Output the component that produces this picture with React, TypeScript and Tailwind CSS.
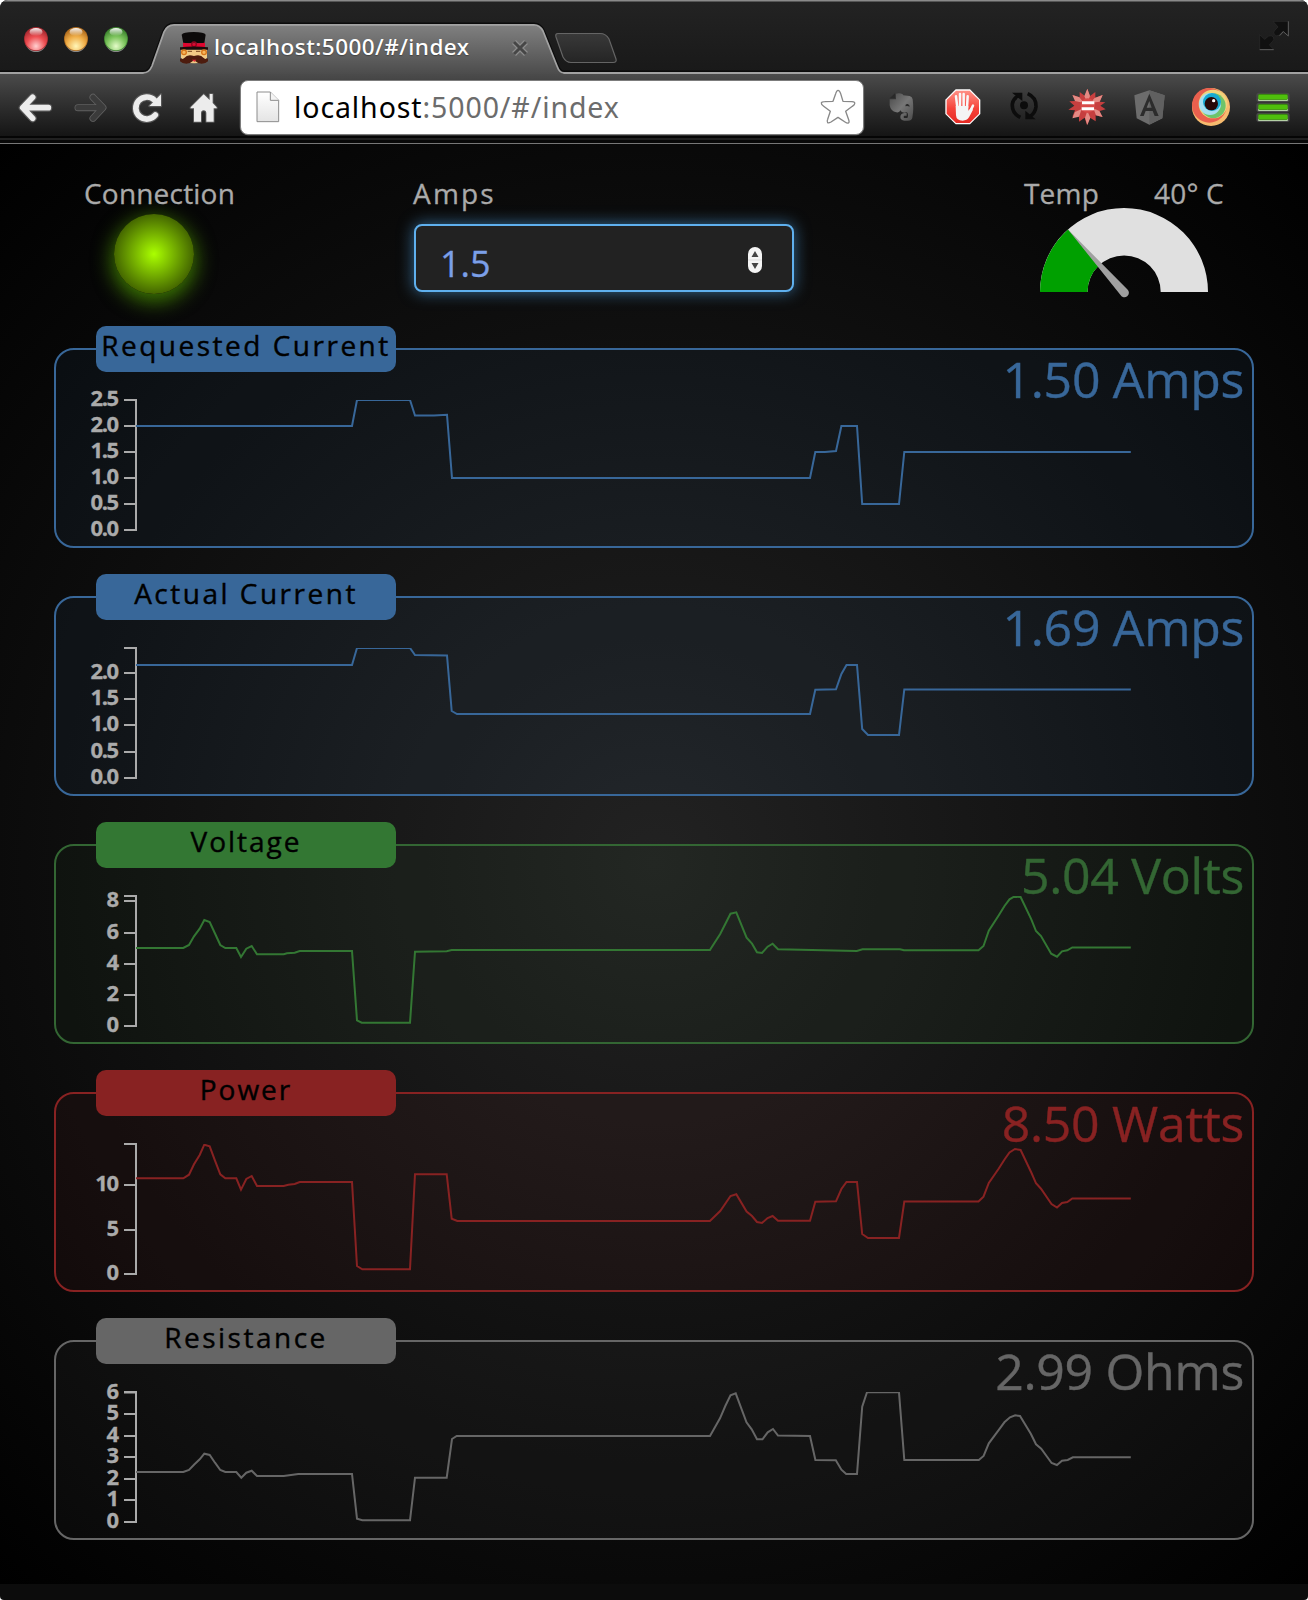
import React from "react";

type Tick = { y: number; label: string };
type Channel = {
  id: string;
  name: string;
  value: string;
  top: number;
  line: string;
  box: string;
  badge: string;
  text: string;
  ticks: Tick[];
  points: string;
};

const channels: Channel[] = [
  {
    id: "requested",
    name: "Requested Current",
    value: "1.50 Amps",
    top: 348,
    line: "#386799",
    box: "border-[#386799] bg-[#30609c]/8",
    badge: "bg-[#386799] tracking-[2.5px]",
    text: "text-[#386799]",
    ticks: [
      { y: 400, label: "2.5" },
      { y: 426, label: "2.0" },
      { y: 452, label: "1.5" },
      { y: 478, label: "1.0" },
      { y: 504, label: "0.5" },
      { y: 530, label: "0.0" },
    ],
    points:
      "136,426 352,426 357,400 410,400 415,415.5 434,415.5 447,414.7 452,478 810,478 815.3,452 825,452 836,451 841.4,426 857,426 862.2,504 899,504 904.3,452 1130.8,452",
  },
  {
    id: "actual",
    name: "Actual Current",
    value: "1.69 Amps",
    top: 596,
    line: "#386799",
    box: "border-[#386799] bg-[#30609c]/8",
    badge: "bg-[#386799] tracking-[2.5px]",
    text: "text-[#386799]",
    ticks: [
      { y: 648, label: "" },
      { y: 673, label: "2.0" },
      { y: 699, label: "1.5" },
      { y: 725, label: "1.0" },
      { y: 752, label: "0.5" },
      { y: 778, label: "0.0" },
    ],
    points:
      "136,665 352,665 357,648 410,648 415,655 447,655.5 451.7,711 457,714 810,714 815.3,689.7 836,689.3 841.4,674 846.5,665 857,665 862.2,729 868,735 899,735 904.3,689.5 1130.8,689.5",
  },
  {
    id: "voltage",
    name: "Voltage",
    value: "5.04 Volts",
    top: 844,
    line: "#337733",
    box: "border-[#336633] bg-[#336633]/8",
    badge: "bg-[#337733] tracking-[2px]",
    text: "text-[#336633]",
    ticks: [
      { y: 896, label: "" },
      { y: 901, label: "8" },
      { y: 933, label: "6" },
      { y: 964, label: "4" },
      { y: 995, label: "2" },
      { y: 1026, label: "0" },
    ],
    points:
      "136,948 183.3,948 189,945 194,936.3 199.7,928.7 204.3,920 209.7,922 215,933.5 220.3,945 225.3,948 236.3,948 241,957 246.3,948.7 251.7,946 257,954.3 283.7,954.3 287,953.3 294.7,952.7 299.7,951 352,951 357,1020.3 361.7,1022.7 410,1022.7 415,951.7 446.7,951.3 451.7,950 709.9,950 720.2,934 730.5,913.7 736.3,912.3 746.6,937.7 752,943.7 757,952.3 762,953 767.6,946.7 772.6,943.7 778,949.3 812,950 844.6,950.7 856.8,951 862.5,949.3 900,949.3 904,950.3 978.5,950.3 983.5,946 988.8,930.7 998.8,915.3 1004.5,906 1009.5,899.3 1014,896.7 1020.6,897 1031.3,919.3 1036,931 1041,936 1051.2,953.7 1057,956.7 1062,951.3 1067.3,950.3 1072.3,947.5 1130.8,947.5",
  },
  {
    id: "power",
    name: "Power",
    value: "8.50 Watts",
    top: 1092,
    line: "#882222",
    box: "border-[#882222] bg-[#882222]/8",
    badge: "bg-[#882222] tracking-[2px]",
    text: "text-[#882222]",
    ticks: [
      { y: 1144, label: "" },
      { y: 1185, label: "10" },
      { y: 1230, label: "5" },
      { y: 1274, label: "0" },
    ],
    points:
      "136,1178.3 183.3,1178.3 189,1174.7 194,1164.3 199.7,1155 204.3,1144.7 209.7,1146.3 215,1160.7 220.3,1174.3 225.3,1178.3 236.3,1178.3 241,1189.7 246.3,1179 251.7,1176 257,1186 283.7,1186 288.3,1184.7 294.7,1184 299.7,1182 352,1182 357,1266 362.3,1269.3 410,1269.3 415,1174.3 446.7,1174.3 451.7,1218.7 457.3,1221 709.9,1221 720.2,1211 730.5,1196 736.3,1194.3 746.6,1211.5 752,1216 757,1222 762,1223 767.6,1218 772.6,1216 778,1220.7 810,1220.7 815.3,1201.7 836,1201.3 841.4,1189 846.5,1182 857,1182 862.2,1234 868,1238 899,1238 904.3,1201.5 978.5,1201.5 983.5,1196.7 988.8,1183 998.8,1168.5 1004.5,1159.5 1009.5,1152.5 1015,1149 1020.6,1150 1031.3,1172.5 1036,1183.3 1041,1188.7 1051.5,1204 1057,1207.5 1062,1203 1067.3,1202 1072.3,1198.5 1130.8,1198.5",
  },
  {
    id: "resistance",
    name: "Resistance",
    value: "2.99 Ohms",
    top: 1340,
    line: "#666666",
    box: "border-[#666666] bg-[#666666]/8",
    badge: "bg-[#666666] tracking-[2.5px]",
    text: "text-[#666666]",
    ticks: [
      { y: 1392.5, label: "6" },
      { y: 1414, label: "5" },
      { y: 1436, label: "4" },
      { y: 1457, label: "3" },
      { y: 1479, label: "2" },
      { y: 1500, label: "1" },
      { y: 1522, label: "0" },
    ],
    points:
      "136,1472 183.3,1472 189,1470 194,1464.7 199.7,1459.3 204.3,1453.7 209.7,1455 215,1462.7 220.3,1470 225.3,1472 236.3,1472 241.3,1477.7 246.3,1472.7 251.7,1470.7 257,1476 283.7,1476 298.3,1474 352,1474 357,1518.7 362.3,1520.3 410,1520.3 415,1477.7 446.7,1477.7 452,1439 456.7,1436 710,1436 720,1418.3 725.3,1406 730.5,1395.3 735.7,1393.3 746.5,1422.3 751.7,1429.3 757,1439.3 762.5,1439.3 767.7,1432.3 773,1429 778,1435.5 810,1436 815.4,1460 835.8,1460.3 841.4,1469.7 846.2,1474 857,1474 862.2,1406.7 867,1392.3 899,1392.3 904.3,1460 978.8,1460 983.6,1456 988.8,1443.3 999.2,1429.3 1004.4,1422.3 1010,1417.3 1015.2,1415.3 1020,1416 1030.8,1433.7 1036,1444.3 1041.2,1448.7 1051.6,1463 1056.9,1465 1062,1460.7 1067.7,1460 1072.9,1457.3 1130.8,1457.3",
  },
];

function Chart({ c }: { c: Channel }) {
  const start = c.top + 52;
  const end = c.top + 182;
  return (
    <svg className="-ml-0.5 -mt-0.5 block h-[200px] w-[1200px] max-w-none" viewBox={`54 ${c.top} 1200 200`}>
      <clipPath id={`plot-${c.id}`}>
        <rect x="136" y={start} width="1100" height="132" />
      </clipPath>
      <path d={`M124 ${start}H136V${end}H124`} fill="none" stroke="#aaa" strokeWidth="2" />
      {c.ticks.map((t) => (
        <g key={t.y}>
          <path d={`M124 ${t.y}H136`} stroke="#aaa" strokeWidth="2" />
          <text
            x="117.500"
            y={t.y + 6.4}
            textAnchor="end"
            className="fill-[#aaa] stroke-[#aaa] font-['Open_Sans'] text-[22px] font-bold tracking-[-1.500px] [stroke-width:0.300px]"
          >
            {t.label}
          </text>
        </g>
      ))}
      <polyline points={c.points} fill="none" stroke={c.line} strokeWidth="2" clipPath={`url(#plot-${c.id})`} />
    </svg>
  );
}

function Panel({ c }: { c: Channel }) {
  return (
    <section className={`relative h-[200px] rounded-[20px] border-2 ${c.box}`}>
      <Chart c={c} />
      <div
        className={`absolute -top-6 left-10 h-[46px] w-[300px] rounded-[10px] text-center text-[28px] leading-[38px] whitespace-nowrap text-black [-webkit-text-stroke:0.400px] ${c.badge}`}
      >
        {c.name}
      </div>
      <div
        className={`absolute top-px right-2 text-[50px] leading-[57px] tracking-[-0.300px] [-webkit-text-stroke:0.400px] ${c.text}`}
      >
        {c.value}
      </div>
    </section>
  );
}

function TrafficLight({ id, dark, mid, light }: { id: string; dark: string; mid: string; light: string }) {
  return (
    <svg width="26" height="28" viewBox="0 0 26 28">
      <defs>
        <radialGradient id={id} cx="50%" cy="82%" r="85%">
          <stop offset="0" stopColor={light} />
          <stop offset="0.5" stopColor={mid} />
          <stop offset="0.9" stopColor={dark} />
        </radialGradient>
        <linearGradient id={`${id}-shine`} x2="0" y2="1">
          <stop offset="0" stopColor="#fff" stopOpacity="0.95" />
          <stop offset="1" stopColor="#fff" stopOpacity="0" />
        </linearGradient>
      </defs>
      <ellipse cx="13" cy="15.500" rx="11" ry="11.500" fill="#888" />
      <circle cx="13" cy="14" r="12" fill={dark} />
      <circle cx="13" cy="14" r="11.200" fill={`url(#${id})`} />
      <ellipse cx="13" cy="7" rx="6.500" ry="4" fill={`url(#${id}-shine)`} />
    </svg>
  );
}

function Favicon() {
  return (
    <svg width="30" height="34" viewBox="537 93 90 102">
      <path d="M543 148h78v24q-8 18-39 18t-39-18z" fill="#f2cb86" />
      <path d="M550 130 545 104q4-8 36-8t36 8l-4 26z" fill="#0c0a0a" />
      <path d="M549 128q32 3 66 0v14h-66z" fill="#e0052f" />
      <circle cx="582" cy="133" r="7" fill="none" stroke="#8e0620" strokeWidth="4" />
      <path d="M540 142q42-5 84 0v7h-84z" fill="#1a0c0c" />
      <circle cx="552" cy="157" r="7" fill="#f6b65c" stroke="#d9761a" strokeWidth="4" />
      <circle cx="612" cy="157" r="7" fill="#f6b65c" stroke="#d9761a" strokeWidth="4" />
      <path d="M563 154h13M588 154h13" stroke="#7a4a20" strokeWidth="3" />
      <path d="M582 168q-20-6-29 6-6 5-13 1v9q6 7 19 7 14-1 23-10 9 9 23 10 13 0 19-7v-9q-7 4-13-1-9-12-29-6z" fill="#4d1c0e" />
      <path d="M576 179h13l-6 7z" fill="#e32b3a" />
    </svg>
  );
}

function TabStrip() {
  return (
    <div className="relative h-[73px] bg-linear-to-b from-[#232323] to-[#191919]">
      <svg className="absolute inset-0" width="1308" height="74" viewBox="0 0 1308 74">
        <defs>
          <linearGradient id="tab-fill" x2="0" y2="1">
            <stop offset="0" stopColor="#808080" />
            <stop offset="1" stopColor="#4c4c4c" />
          </linearGradient>
          <linearGradient id="new-tab" x2="0" y2="1">
            <stop offset="0" stopColor="#393939" />
            <stop offset="1" stopColor="#252525" />
          </linearGradient>
        </defs>
        <path
          d="M0 72.5H143Q149 72.5 152 66L164 32Q167 24.5 174 24.5H534Q540 24.5 543 31L557 66Q559.5 72.500 564 72.500H1308V76H0Z"
          fill="none"
          stroke="#0b0b0b"
          strokeWidth="4"
        />
        <path d="M143 74Q149 73 152 66L164 32Q167 25 174 25H534Q540 25 543 31L557 66Q559.5 73 564 74Z" fill="url(#tab-fill)" />
        <path
          d="M0 73H143Q149 73 152 66L164 32Q167 24.800 174 24.800H534Q540 24.800 543 31L557 66Q559.500 73 564 73H1308"
          fill="none"
          stroke="#a2a2a2"
          strokeWidth="1.800"
        />
        <path
          d="M558 33.500H600Q606 33.500 609 39L616 59Q617 62.500 613 62.500H571Q566 62.500 563 57L556 37Q555 33.500 558 33.500Z"
          fill="url(#new-tab)"
          stroke="#656565"
          strokeWidth="1.200"
        />
        <path d="M0 .75H1308" stroke="#8a8a8a" strokeWidth="1.500" />
      </svg>
      <div className="relative flex h-full">
        <div className="ml-[23px] mt-[25px] flex h-7 gap-3.5">
          <TrafficLight id="close" dark="#a82a30" mid="#ee4e52" light="#ffd0d0" />
          <TrafficLight id="minimise" dark="#b06c1e" mid="#f0ae48" light="#fff6b8" />
          <TrafficLight id="zoom" dark="#3f8530" mid="#7cc45c" light="#e4fbc8" />
        </div>
        <div className="ml-[50px] mt-[31px]">
          <Favicon />
        </div>
        <div className="ml-[5px] mt-[30px] w-[297px] font-['Noto_Sans'] text-[22.500px] leading-[34px] font-medium tracking-[0.450px] whitespace-nowrap text-white [text-shadow:0_1px_1px_#444]">
          localhost:5000/#/index
        </div>
        <svg className="mt-[39px]" width="18" height="18" viewBox="0 0 18 18">
          <path d="m3 3 12 12M15 3 3 15" stroke="#8c8c8c" strokeWidth="5.500" />
          <path d="m3 3 12 12M15 3 3 15" stroke="#464646" strokeWidth="3" />
        </svg>
        <svg className="mt-5 mr-[18px] ml-auto" width="32" height="32" viewBox="1375 60 96 96">
          <g fill="#101010" stroke="#2c2c2c" strokeWidth="2">
            <path d="M1420 64h46v44l-16-15-12 13q-8 4-14-2-5-8 2-14l9-9z" />
            <path d="M1380 104l15 14 12-10q8-3 14 3 4 8-2 13l-10 11 14 14h-43z" />
          </g>
          <path d="M1380 149h42M1466 64v44l-15-13-11 12" fill="none" stroke="#5c5c5c" strokeWidth="3" />
        </svg>
      </div>
    </div>
  );
}

const ICON = "size-9 shrink-0 overflow-visible";

function Toolbar() {
  return (
    <div className="flex h-[63px] items-center bg-linear-to-b from-[#4c4c4c] to-[#151515] pt-[5px]">
      <svg className={`${ICON} ml-[17px]`} viewBox="51 267 108 108">
        <g fill="none" strokeLinecap="round" strokeLinejoin="round">
          <path d="M98 292 68 323l30 32M72 323h73" stroke="#555" strokeWidth="24" />
          <path d="M98 292 68 323l30 32M72 323h73" stroke="#ececec" strokeWidth="17" />
        </g>
      </svg>
      <svg className={`${ICON} ml-[19px]`} viewBox="216 267 108 108">
        <g fill="none" strokeLinecap="round" strokeLinejoin="round">
          <path d="m279 292 30 31-30 32M305 323h-71" stroke="#606060" strokeWidth="21" />
          <path d="m279 292 30 31-30 32M305 323h-71" stroke="#3b3b3b" strokeWidth="16" />
        </g>
      </svg>
      <svg className={`${ICON} ml-[22px]`} viewBox="390 267 108 108">
        <g fill="none" stroke="#555" strokeLinejoin="round">
          <path d="M466 345A33 33 0 1 1 463 300" strokeWidth="24" strokeLinecap="round" />
          <path d="M483 283v35h-35z" strokeWidth="7" />
        </g>
        <path d="M466 345A33 33 0 1 1 463 300" fill="none" stroke="#ececec" strokeWidth="17" strokeLinecap="round" />
        <path d="M483 283v35h-35z" fill="#ececec" />
      </svg>
      <svg className={`${ICON} ml-[19px]`} viewBox="555 267 108 108">
        <path
          d="m611 283-39 39v3h10v40h21v-25q0-9 8-9t8 9v25h22v-40h9v-3l-12-13v-27h-9v18z"
          fill="#ececec"
          stroke="#555"
          strokeWidth="6"
          strokeLinejoin="round"
          paintOrder="stroke"
        />
      </svg>

      <div className="ml-[19px] flex h-[55px] w-[624px] items-center rounded-[8px] border border-[#7c7c7c] bg-white shadow-[0_0_0_0.500px_#444]">
        <svg className="ml-[15px]" width="24" height="32" viewBox="765 274 72 96">
          <defs>
            <linearGradient id="sheet" x2="0" y2="1">
              <stop offset="0" stopColor="#fff" />
              <stop offset="1" stopColor="#e4e4e4" />
            </linearGradient>
          </defs>
          <path d="M768 277h40l25 25v64h-65z" fill="url(#sheet)" stroke="#8c8c8c" strokeWidth="3" />
          <path d="M808 277v25h25" fill="#f4f4f4" stroke="#8c8c8c" strokeWidth="3" />
        </svg>
        <div className="ml-[14px] grow font-['Noto_Sans'] text-[28.500px] leading-[50px] tracking-[0.900px] whitespace-nowrap text-[#6c6c6c]">
          <span className="text-black">localhost</span>:5000/#/index
        </div>
        <svg className="mr-[7px] size-9" viewBox="59 265 108 108">
          <path
            d="M113 269q5 0 8 10l7 23 27 1q10 1 8 6 0 3-7 8l-20 15 9 25q3 9-1 10t-10-3l-21-14-21 14q-7 4-10 2-3-3 0-10l8-24-20-15q-8-6-7-10 1-4 10-4l25-1 8-23q3-10 7-10z"
            fill="#fff"
            stroke="#888"
            strokeWidth="4"
            strokeLinejoin="round"
          />
        </svg>
      </div>

      <svg className={`${ICON} ml-[19px]`} viewBox="249 267 108 108">
        <defs>
          <linearGradient id="elephant" x2="1" y2="1">
            <stop offset="0" stopColor="#484848" />
            <stop offset="0.500" stopColor="#777" />
            <stop offset="1" stopColor="#4b4b4b" />
          </linearGradient>
        </defs>
        <path
          d="M269 298h19v-17q10-3 19 1l3 4 19 2q8 2 9 10 4 30-1 55-2 9-13 9h-11q-12-1-12-11 0-10 12-12h7v8h-7q-4 3-1 7h10q5-9-1-17-16 4-20-6-2 8-12 6-17-3-20-21z"
          fill="url(#elephant)"
        />
        <path d="m269 295 16-15v15z" fill="#292929" />
        <path d="M316 319q0-8 7-7 6 2 6 8-6-3-13-1z" fill="#2a2a2a" />
      </svg>
      <svg className={`${ICON} ml-[26px]`} viewBox="435 267 108 108">
        <defs>
          <linearGradient id="stop-sign" x2="0" y2="1">
            <stop offset="0" stopColor="#ff9186" />
            <stop offset="0.550" stopColor="#f5433a" />
            <stop offset="1" stopColor="#e62a24" />
          </linearGradient>
        </defs>
        <path d="M467 268h43l31 31v43l-31 31h-43l-31-31v-43z" fill="#fff" />
        <path d="M468 272h41l28 28v41l-28 28h-41l-28-28v-41z" fill="url(#stop-sign)" />
        <g stroke="#f8f8f8" strokeLinecap="round" strokeWidth="7.500" fill="none">
          <path d="M468 289l4 34M480 282v40M491 282v40M503 289l-2 34M519 317l-12 24" />
        </g>
        <path d="M467 318h38v14l8-8 6 5-12 23q-6 10-19 10-19 0-20-16z" fill="#f4f4f4" />
      </svg>
      <svg className={`${ICON} ml-[25px]`} viewBox="618 267 108 108">
        <g fill="none" stroke="#0c0c0c" strokeWidth="11">
          <path d="M661 352Q635 340 637 312 639 296 654 288" />
          <path d="M683 281Q709 292 708 320 706 338 692 348" />
        </g>
        <circle cx="672" cy="316" r="12" fill="#0c0c0c" />
        <path d="M636 278h31v25zM707 358h-31v-26z" fill="#0c0c0c" />
      </svg>
      <svg className={`${ICON} ml-[27px]`} viewBox="807 267 108 108">
        <path
          d="m862 266 8 22 16-12v17l22-8-9 20 17 2-15 10 16 11-18 5 8 18-20-5v18l-17-11-9 22-7-22-17 12v-19l-20 4 8-19-20-2 18-12-15-13 19-1-8-18 20 7v-16l16 12z"
          fill="#c63f3f"
        />
        <path d="m862 266 8 22-8 22-9-22zM908 285l-9 20-29 4 14-15zM817 285l8 18 27 6-14-17zM908 351l-20-5-8-21 18 8zM817 355l8-19 20-9-8 23zM862 375l-7-22 7-20 9 20z" fill="#e58a84" />
        <circle cx="863" cy="317" r="22" fill="#d94b49" />
        <path d="M846 308h37M845 326h37" stroke="#fff" strokeWidth="9" />
      </svg>
      <svg className={`${ICON} ml-[26px]`} viewBox="993 267 108 108">
        <path d="m1048 271 46 15-7 69-39 19-38-19-7-69z" fill="#6c6c6c" />
        <path d="M1048 271v103l39-19 7-69z" fill="#606060" />
        <path d="m1048 281 28 67h-12l-6-15h-21l-6 15h-11zm0 22-8 20h15z" fill="#2c2c2c" fillRule="evenodd" />
      </svg>
      <svg className={`${ICON} ml-[26px]`} viewBox="1179 267 108 108">
        <circle cx="1233" cy="321" r="57" fill="#f7bb6e" />
        <circle cx="1228" cy="316" r="52" fill="#e9604e" />
        <circle cx="1239" cy="312" r="43" fill="#f0d47c" />
        <circle cx="1240" cy="317" r="37" fill="#6dc46a" />
        <circle cx="1230" cy="312" r="33" fill="#a6dff0" />
        <circle cx="1236" cy="306" r="27" fill="#16a9d2" />
        <circle cx="1234" cy="311" r="20" fill="#270808" />
        <circle cx="1241" cy="302" r="5" fill="#fff" />
      </svg>
      <svg className={`${ICON} ml-[26px]`} viewBox="1365 267 108 108">
        {[282, 312, 342].map((y) => (
          <g key={y}>
            <rect x="1369" y={y - 4} width="100" height="28" rx="8" fill="#484848" />
            <rect x="1374" y={y + 4} width="90" height="17" rx="4" fill="#c4dcb8" />
            <rect x="1375" y={y + 1} width="88" height="16" rx="4" fill="#4fbf0c" stroke="#2f7a06" strokeWidth="2" />
          </g>
        ))}
      </svg>
    </div>
  );
}

function Gauge() {
  return (
    <svg className="ml-3.5 block" width="172" height="92" viewBox="1038 206 172 92">
      <path d="M1040 292a84 84 0 0 1 168 0h-47.300a36.500 36.500 0 0 0-73.200 0z" fill="#e0e0e0" />
      <path d="M1040 292A84 84 0 0 1 1068 229.600L1099.600 265A36.500 36.500 0 0 0 1087.500 292z" fill="#00a000" />
      <path d="M1068 229.500 1127.500 289.500A4.500 4.500 0 1 1 1120.500 295z" fill="#a0a0a0" />
    </svg>
  );
}

function Controls() {
  return (
    <div className="flex h-[204px] pt-[29px] pl-[30px] text-[28px] leading-10 text-[#aaa] [-webkit-text-stroke:0.300px]">
      <div className="w-[330px]">
        <div className="tracking-[0.200px]">Connection</div>
        <div className="mt-px ml-[30px] size-20 rounded-full bg-[radial-gradient(circle_closest-side,#aaff00,#446600)] shadow-[0_6px_20px_2px_rgba(75,150,0,0.800)]" />
      </div>
      <div className="w-[380px]">
        <div className="-ml-px tracking-[2.200px]">Amps</div>
        <div className="mt-[11px] flex h-[68px] w-[380px] items-center rounded-lg border-2 border-[#5fb0ee] bg-[#222] pr-[30px] pl-6 shadow-[0_0_16px_rgba(82,168,236,0.600)]">
          <span className="grow pt-[11px] text-4xl leading-[53px] text-[#7b9fe8]">1.5</span>
          <svg className="mt-1" width="14" height="26" viewBox="0 0 14 26">
            <rect width="14" height="26" rx="7" fill="#f4f4f4" />
            <path d="M0 13H14" stroke="#ddd" />
            <path d="m7 4 3.500 6h-7zM7 22l3.500-6h-7z" fill="#444" />
          </svg>
        </div>
      </div>
      <div className="ml-[230px] w-[210px]">
        <div className="flex h-[33px] tracking-[0.200px] whitespace-nowrap">
          <span className="w-[130px]">Temp</span>
          <span>40° C</span>
        </div>
        <Gauge />
      </div>
    </div>
  );
}

export default function App() {
  return (
    <div className="h-[1600px] w-[1308px] bg-white">
      <div className="flex h-full flex-col overflow-hidden rounded-t-[8px] rounded-b-[4px] bg-[#0c0c0c] font-['Open_Sans',sans-serif]">
        <TabStrip />
        <Toolbar />
        <div className="h-2 border-t-2 border-b border-t-[#050505] border-b-[#777] bg-linear-to-b from-[#202020] from-35% to-[#080808] to-45%" />
        <main className="h-[1440px] bg-[radial-gradient(circle_at_center,#222,#000)] px-[54px]">
          <Controls />
          <div className="flex flex-col gap-12">
            {channels.map((c) => (
              <Panel key={c.id} c={c} />
            ))}
          </div>
        </main>
      </div>
    </div>
  );
}
